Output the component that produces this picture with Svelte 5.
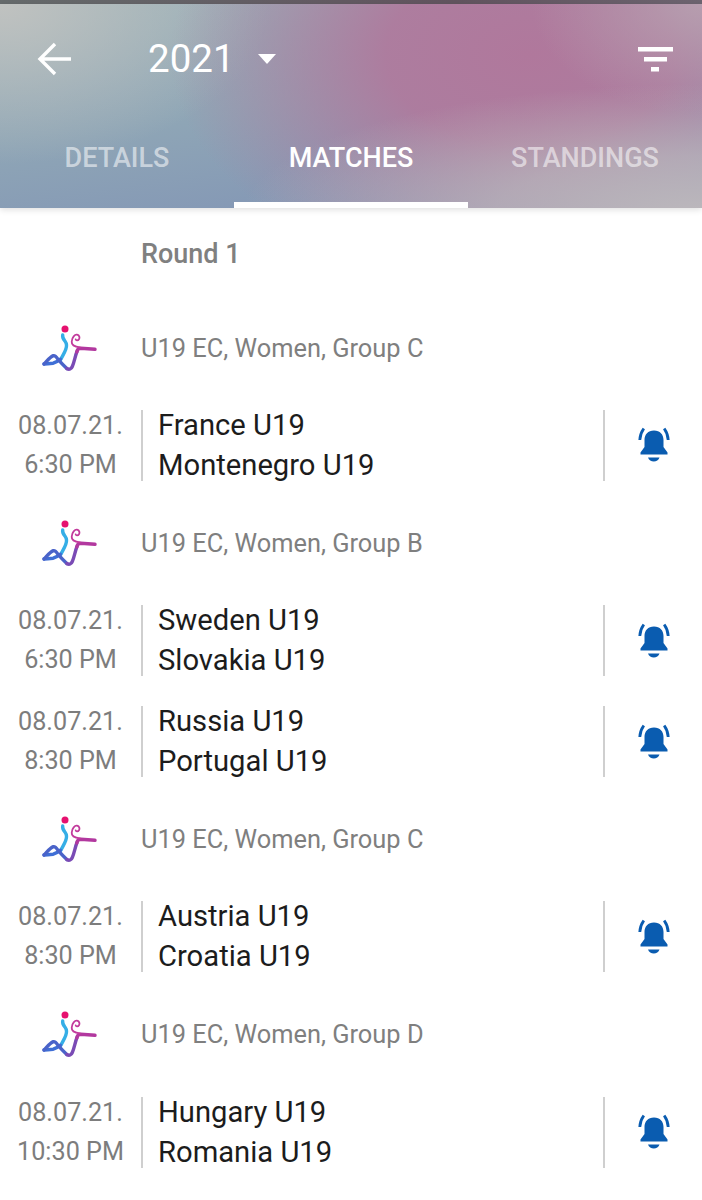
<script lang="ts">
    type Match = { date: string; time: string; home: string; away: string };
    type Group = { name: string; matches: Match[] };

    const TABS = ['DETAILS', 'MATCHES', 'STANDINGS'];

    const GROUPS: Group[] = [
        { name: 'U19 EC, Women, Group C', matches: [
            { date: '08.07.21.', time: '6:30 PM', home: 'France U19', away: 'Montenegro U19' },
        ] },
        { name: 'U19 EC, Women, Group B', matches: [
            { date: '08.07.21.', time: '6:30 PM', home: 'Sweden U19', away: 'Slovakia U19' },
            { date: '08.07.21.', time: '8:30 PM', home: 'Russia U19', away: 'Portugal U19' },
        ] },
        { name: 'U19 EC, Women, Group C', matches: [
            { date: '08.07.21.', time: '8:30 PM', home: 'Austria U19', away: 'Croatia U19' },
        ] },
        { name: 'U19 EC, Women, Group D', matches: [
            { date: '08.07.21.', time: '10:30 PM', home: 'Hungary U19', away: 'Romania U19' },
        ] },
    ];
</script>

<div class="page">
    <div class="status"></div>
    <header class="header">
        <div class="toolbar">
            <svg class="back" width="34" height="34" viewBox="0 0 34 34" fill="none" stroke="#fff" stroke-width="3.4">
                <path d="M34 17H3M18 2 3 17 18 32" />
            </svg>
            <span class="year">2021</span>
            <span class="caret"></span>
            <svg class="filter" width="36" height="26" viewBox="0 0 36 26" fill="#fff">
                <rect x="1" y="1" width="35" height="4.500" />
                <rect x="7" y="11" width="23" height="4.500" />
                <rect x="14" y="21" width="8" height="4.500" />
            </svg>
        </div>
        <nav class="tabs">
            {#each TABS as tab, i}
                <div class="tab" class:active={i === 1}>{tab}</div>
            {/each}
        </nav>
    </header>

    <div class="round">Round 1</div>

    {#each GROUPS as group}
        <div class="group">
            <svg class="logo" width="60" height="48" viewBox="0 0 60 48" fill="none" stroke-linecap="round" stroke-linejoin="round">
                <circle cx="35" cy="5" r="3.500" fill="#e6116f" />
                <path d="M32.700 11c-.5 3 .5 4 2.500 6.500 1.800 2.500 1.500 5.500.5 8-1 3-3 6-5 10" stroke="#35aee6" stroke-width="3.400" />
                <path d="M14 40c3-.2 6-.5 9-.8 3-.5 5-2 7.500-4" stroke="#3f6fd6" stroke-width="3.400" />
                <path d="M14 40c3-3 6-7 9.300-8.300 2-.6 3.500 1.800 5 4 3 3.500 6 6.500 8.500 8.800" stroke="#4a63c9" stroke-width="3.400" />
                <path d="M36.800 44.500c2.500 1.500 4.500 .5 5.500-2 2-4.500 3-11 4.700-15" stroke="#7a4bb5" stroke-width="3.400" />
                <path d="M46.800 28c.5-3 2-3.700 4-3.700l14.200 1" stroke="#b2389f" stroke-width="3.400" />
                <path d="M50 23.300c-5-.5-8.500-2.500-8.300-5.600C41.900 13 45 10.300 47 10.700c2.500.5 3 3 2 4.500-1 1.500-3 1.500-3.300 .2" stroke="#c23a9c" stroke-width="1.800" />
            </svg>
            <span class="group-name">{group.name}</span>
        </div>
        {#each group.matches as match}
            <div class="match">
                <div class="when">
                    <span>{match.date}</span>
                    <span>{match.time}</span>
                </div>
                <div class="teams">
                    <span>{match.home}</span>
                    <span>{match.away}</span>
                </div>
                <div class="notify">
                    <svg width="34" height="38" viewBox="0 0 34 38" fill="#0a5cb0">
                        <path d="M17 4.500c-6 0-9.500 4-9.500 9.500v7L3.500 26.500v2h27v-2l-4-5.500v-7c0-5.500-3.500-9.500-9.500-9.500z" />
                        <path d="M11 31.500h11.500c-.8 2.500-3.200 4-5.700 4s-5-1.500-5.800-4z" />
                        <path d="M2.800 14c.2-4 1.500-8 4-11.500M31.200 14c-.2-4-1.500-8-4-11.500" fill="none" stroke="#0a5cb0" stroke-width="2.800" />
                    </svg>
                </div>
            </div>
        {/each}
    {/each}
</div>

<style>
    :global(body) {
        margin: 0;
        background: #fff;
    }

    .page {
        width: 702px;
        height: 1200px;
        overflow: hidden;
        background: #fff;
        font-family: Roboto, "Liberation Sans", sans-serif;
    }

    .status {
        height: 4px;
        background: linear-gradient(90deg, #666b6c, #62545f 65%, #6d6470);
    }

    .header {
        height: 204px;
        display: flex;
        flex-direction: column;
        box-shadow: 0 2px 6px rgba(0, 0, 0, 0.12);
        position: relative;
        background:
            radial-gradient(ellipse 460px 130px at 702px 210px, rgba(188, 184, 188, 1) 0%, rgba(188, 184, 188, 0.7) 45%, rgba(188, 184, 188, 0) 100%),
            radial-gradient(ellipse 170px 110px at 702px 0px, rgba(184, 160, 176, 0.9) 0%, rgba(184, 160, 176, 0) 100%),
            radial-gradient(ellipse 360px 230px at 530px 50px, rgba(176, 120, 156, 1) 0%, rgba(176, 120, 156, 0.9) 40%, rgba(176, 120, 156, 0) 100%),
            radial-gradient(ellipse 270px 160px at 0px 0px, rgba(192, 194, 192, 1) 0%, rgba(192, 194, 192, 0.55) 45%, rgba(192, 194, 192, 0) 100%),
            linear-gradient(172deg, #9ab1b8 0%, #8fa6b6 45%, #7f91b5 100%);
    }

    .toolbar {
        display: flex;
        align-items: center;
        height: 110px;
        color: #fff;
    }

    .back {
        margin-left: 37px;
    }

    .year {
        margin-left: 77px;
        font-size: 38.500px;
        line-height: 1;
    }

    .caret {
        margin-left: 23px;
        border-left: 9.500px solid transparent;
        border-right: 9.500px solid transparent;
        border-top: 10px solid #fff;
    }

    .filter {
        margin-left: auto;
        margin-right: 29px;
    }

    .tabs {
        flex: 1;
        display: grid;
        grid-template-columns: repeat(3, 234px);
    }

    .tab {
        display: flex;
        align-items: center;
        justify-content: center;
        height: 88px;
        font-size: 27px;
        font-weight: 500;
        color: rgba(255, 255, 255, 0.55);
        border-bottom: 6px solid transparent;
    }

    .tab.active {
        color: #fff;
        border-bottom-color: #fff;
    }

    .round {
        height: 92.800px;
        padding-left: 141px;
        padding-top: 31px;
        box-sizing: border-box;
        font-size: 27px;
        font-weight: 500;
        line-height: 30px;
        color: #808080;
    }

    .group {
        height: 94.200px;
        display: flex;
        align-items: center;
    }

    .logo {
        margin-left: 30px;
        margin-right: 51px;
        overflow: visible;
    }

    .group-name {
        font-size: 25.400px;
        color: #7f7f7f;
    }

    .match {
        height: 71px;
        padding: 15px 0;
        display: flex;
        align-items: stretch;
    }

    .when {
        width: 141px;
        flex: none;
        display: flex;
        flex-direction: column;
        gap: 9px;
        padding-top: 1px;
        align-items: center;
        box-sizing: border-box;
        font-size: 25.200px;
        line-height: 30px;
        color: #7d7d7d;
    }

    .teams {
        flex: 1;
        display: flex;
        flex-direction: column;
        gap: 10px;
        padding-left: 15px;
        border-left: 2px solid #cfcfcf;
        font-size: 29.200px;
        line-height: 30px;
        color: #1c1c1c;
    }

    .notify {
        width: 97px;
        flex: none;
        display: flex;
        align-items: center;
        justify-content: center;
        border-left: 2px solid #cfcfcf;
    }
</style>
